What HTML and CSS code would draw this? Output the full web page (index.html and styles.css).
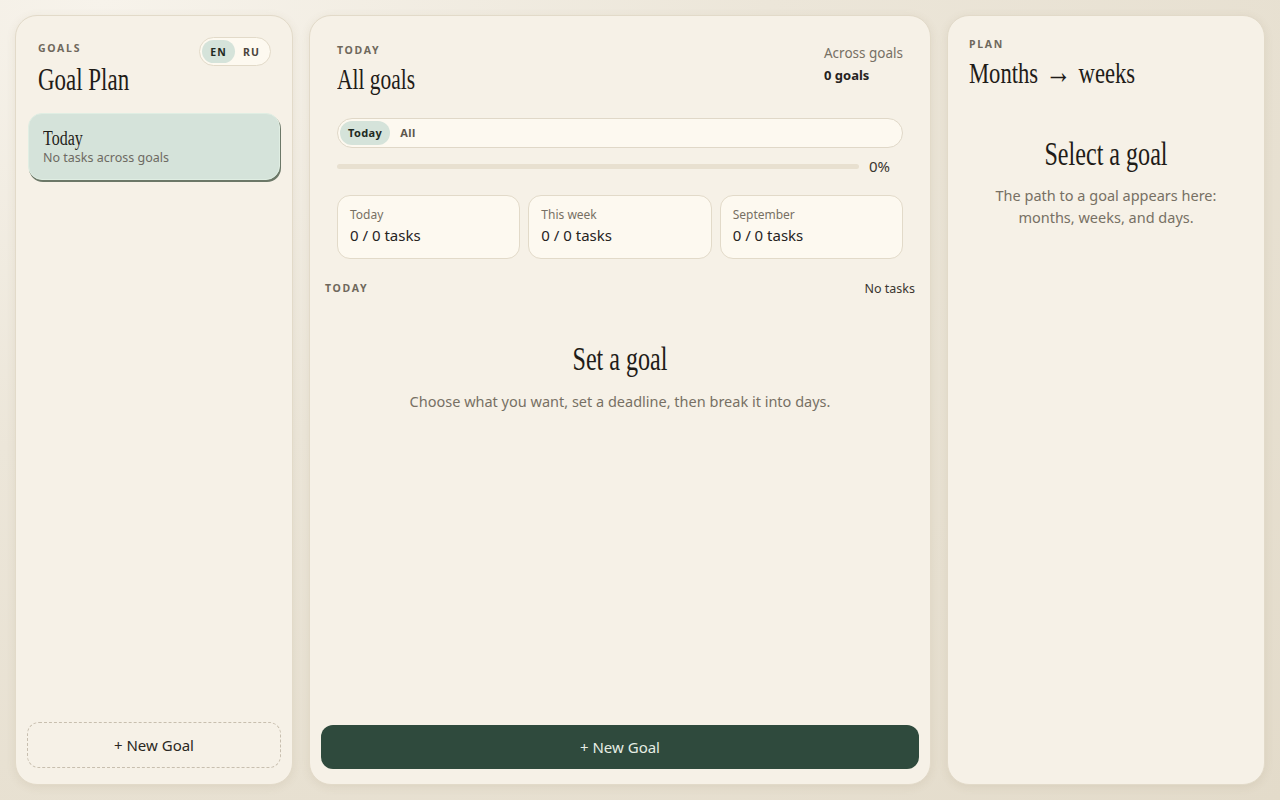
FILE: index.html
```html
<!DOCTYPE html>
<html lang="en">
<head>
<meta charset="utf-8">
<title>Goal Plan</title>
<link rel="stylesheet" href="styles.css">
</head>
<body>
<div class="app">
  <aside class="panel goals">
    <div class="goals-head">
      <div>
        <div class="eyebrow">GOALS</div>
        <h1 class="title title-lg">Goal Plan</h1>
      </div>
      <div class="lang">
        <span class="lang-btn active">EN</span>
        <span class="lang-btn">RU</span>
      </div>
    </div>
    <div class="goal-card">
      <div class="goal-card-title">Today</div>
      <div class="goal-card-sub">No tasks across goals</div>
    </div>
    <div class="spacer"></div>
    <button class="btn-dashed">+ New Goal</button>
  </aside>

  <main class="panel today">
    <div class="today-inner">
      <div class="today-head">
        <div>
          <div class="eyebrow">TODAY</div>
          <h1 class="title title-md">All goals</h1>
        </div>
        <div class="across">
          <div class="across-label">Across goals</div>
          <div class="across-value">0 goals</div>
        </div>
      </div>
      <div class="tabs">
        <span class="tab active">Today</span>
        <span class="tab">All</span>
      </div>
      <div class="progress-row">
        <div class="progress"><div class="progress-fill" style="width:0%"></div></div>
        <span class="progress-val">0%</span>
      </div>
      <div class="stats">
        <div class="stat"><div class="stat-label">Today</div><div class="stat-value">0 / 0 tasks</div></div>
        <div class="stat"><div class="stat-label">This week</div><div class="stat-value">0 / 0 tasks</div></div>
        <div class="stat"><div class="stat-label">September</div><div class="stat-value">0 / 0 tasks</div></div>
      </div>
    </div>
    <div class="section-row">
      <span class="eyebrow">TODAY</span>
      <span class="section-meta">No tasks</span>
    </div>
    <div class="empty">
      <h2 class="empty-title">Set a goal</h2>
      <p class="empty-text">Choose what you want, set a deadline, then break it into days.</p>
    </div>
    <div class="spacer"></div>
    <button class="btn-primary">+ New Goal</button>
  </main>

  <aside class="panel plan">
    <div class="eyebrow">PLAN</div>
    <h1 class="title title-plan">Months <span class="arrow">→</span> weeks</h1>
    <div class="empty plan-empty">
      <h2 class="empty-title">Select a goal</h2>
      <p class="empty-text">The path to a goal appears here:<br>months, weeks, and days.</p>
    </div>
  </aside>
</div>
</body>
</html>
```

FILE: styles.css
```css
* { box-sizing: border-box; }
html, body { height: 100%; }
body {
  margin: 0;
  font-family: "Noto Sans", "Liberation Sans", sans-serif;
  color: #26231e;
  background: radial-gradient(ellipse at 8% 0%, #f7f3eb 0%, #ece6d9 40%, #e3dbca 100%);
}
.app {
  display: grid;
  grid-template-columns: 278px 1fr 318px;
  gap: 16px;
  padding: 15px;
  height: 800px;
}
.panel {
  background: #f6f1e7;
  border: 1px solid #e2dac9;
  border-radius: 22px;
  box-shadow: 0 2px 10px rgba(120, 100, 60, 0.10);
  display: flex;
  flex-direction: column;
  min-height: 0;
}
.eyebrow {
  font-size: 10.5px;
  font-weight: 700;
  letter-spacing: 1.7px;
  color: #6f685c;
  line-height: 14px;
}
.title {
  margin: 0;
  font-family: "Liberation Serif", serif;
  font-weight: 400;
  line-height: 36px;
  color: #1f1c18;
  transform: scaleX(0.74);
  transform-origin: left center;
  white-space: nowrap;
}
.title-lg { font-size: 31px; margin-top: 7px; }
.title-md { font-size: 29px; margin-top: 4px; }
.title-plan { font-size: 29px; margin-top: 4px; transform: scaleX(0.78); }
.arrow { font-size: 1.15em; margin: 0 2px; line-height: 0; }
.spacer { flex: 1; }

/* left */
.goals { padding: 25px 11px 16px; }
.goals-head {
  display: flex;
  justify-content: space-between;
  align-items: flex-start;
  padding: 0 11px;
}
.lang {
  display: flex;
  border: 1px solid #e2dac9;
  background: #fdf9f0;
  border-radius: 999px;
  padding: 2px;
  margin-top: -4px;
  margin-right: -1px;
}
.lang-btn {
  width: 33px;
  height: 23px;
  display: flex;
  align-items: center;
  justify-content: center;
  font-size: 10.5px;
  font-weight: 700;
  letter-spacing: 1px;
  color: #4a453d;
  border-radius: 999px;
}
.lang-btn.active { background: #d5e3da; color: #1f2a22; }
.goal-card {
  margin: 15px 1px 0;
  background: #d5e3da;
  border: 1px solid #e0eee3;
  border-radius: 14px;
  box-shadow: 1px 2px 0 #6c7868;
  padding: 13px 14px 13px;
  height: 67px;
}
.goal-card-title {
  font-family: "Liberation Serif", serif;
  font-size: 20.5px;
  line-height: 22px;
  color: #1f1c18;
  transform: scaleX(0.78);
  transform-origin: left center;
}
.goal-card-sub {
  font-size: 12.5px;
  color: #6d6a62;
  line-height: 17px;
}
.btn-dashed {
  font-family: inherit;
  height: 46px;
  border: 1px dashed #c8bfaf;
  background: transparent;
  border-radius: 12px;
  font-size: 15px;
  color: #2a2722;
}

/* middle */
.today { padding: 27px 11px 15px; }
.today-inner { padding: 0 16px; }
.today-head { display: flex; justify-content: space-between; align-items: flex-start; }
.across { padding-top: 1px; }
.across-label { font-size: 13.5px; color: #777064; line-height: 18px; }
.across-value { font-size: 13px; font-weight: 700; color: #26231e; line-height: 26px; }
.tabs {
  margin-top: 21px;
  display: flex;
  align-items: center;
  height: 30px;
  border: 1px solid #e0d8c8;
  background: #fdf9f0;
  border-radius: 999px;
  padding: 0 2px;
  gap: 2px;
}
.tab {
  font-size: 11px;
  font-weight: 700;
  letter-spacing: 0.4px;
  color: #5d574d;
  padding: 5px 8px;
  border-radius: 999px;
  line-height: 14px;
}
.tab.active { background: #d5e3da; color: #1f2a22; }
.progress-row { display: flex; align-items: center; margin-top: 9px; gap: 10px; padding-right: 13px; }
.progress { flex: 1; height: 5px; border-radius: 3px; background: #e8e0d0; overflow: hidden; }
.progress-fill { height: 100%; background: #2f4a3d; }
.progress-val { font-size: 15px; color: #3a362f; line-height: 18px; }
.stats {
  margin-top: 20px;
  display: grid;
  grid-template-columns: repeat(3, 1fr);
  gap: 8px;
}
.stat {
  background: #fdf9f0;
  border: 1px solid #e2dac9;
  border-radius: 13px;
  padding: 11px 12px;
  height: 64px;
}
.stat-label { font-size: 12px; color: #777064; line-height: 16px; }
.stat-value { font-size: 15px; color: #26231e; line-height: 24px; }
.section-row {
  margin-top: 20px;
  display: flex;
  justify-content: space-between;
  align-items: center;
  height: 18px;
  padding: 0 4px;
}
.section-meta { font-size: 12.5px; color: #3a362f; }
.empty { text-align: center; margin-top: 42px; }
.empty-title {
  margin: 0;
  font-family: "Liberation Serif", serif;
  font-weight: 400;
  font-size: 33px;
  line-height: 40px;
  color: #1f1c18;
  transform: scaleX(0.73);
  transform-origin: center center;
  white-space: nowrap;
}
.empty-text {
  margin: 11px 0 0;
  font-size: 14.5px;
  line-height: 22px;
  color: #777064;
}
.btn-primary {
  font-family: inherit;
  height: 44px;
  border: 0;
  background: #2f4a3d;
  border-radius: 12px;
  font-size: 15px;
  color: #e6eee4;
}

/* right */
.plan { padding: 21px 21px; }
.plan-empty { margin-top: 43px; }
.plan-empty .empty-text { margin-top: 10px; }
```
